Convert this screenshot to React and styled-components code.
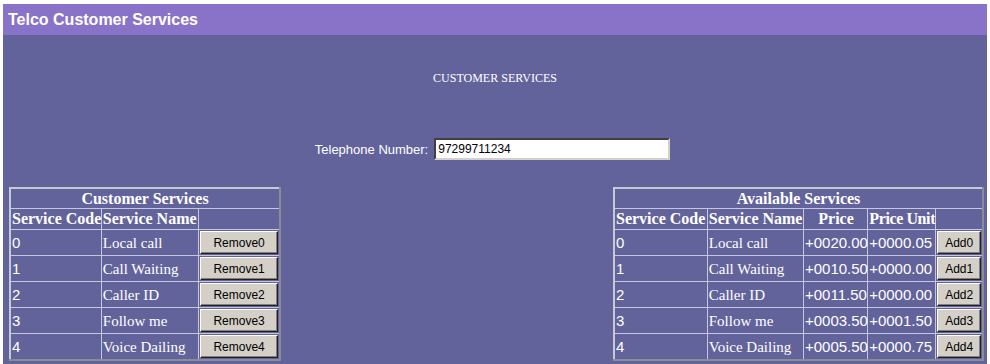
import React from "react";
import styled, { createGlobalStyle } from "styled-components";

const Global = createGlobalStyle`
  html, body { margin: 0; padding: 0; background: #ffffff; }
  body { width: 990px; height: 364px; overflow: hidden; }
`;

const Page = styled.div`
  margin: 4px 3px 0 3px;
  height: 360px;
  background: #63639c;
  display: flex;
  flex-direction: column;
`;

const TitleBar = styled.div`
  height: 31px;
  background: #8973c8;
  display: flex;
  align-items: center;
  padding-left: 5px;
  font: bold 16px "Liberation Sans", Arial, sans-serif;
  color: #ffffff;
`;

const Subtitle = styled.div`
  margin-top: 36px;
  text-align: center;
  font: 12px/14px "Liberation Serif", "Times New Roman", serif;
  color: #ffffff;
`;

const PhoneRow = styled.div`
  margin-top: 53px;
  display: flex;
  justify-content: center;
  align-items: center;
  gap: 6px;
  padding-right: 5px;
`;

const Label = styled.label`
  font: 13px "Liberation Sans", Arial, sans-serif;
  color: #ffffff;
`;

const PhoneInput = styled.input`
  box-sizing: border-box;
  width: 236px;
  height: 22px;
  padding: 0 2px;
  border: 2px solid;
  border-color: #404040 #d4d0c8 #d4d0c8 #404040;
  background: #ffffff;
  font: 12px "Liberation Sans", Arial, sans-serif;
  color: #000000;
  outline: none;
`;

const TablesRow = styled.div`
  margin-top: 27px;
  display: flex;
  justify-content: space-between;
  align-items: flex-start;
  padding: 0 3px 0 6px;
`;

const Table = styled.table`
  table-layout: fixed;
  width: ${(p) => p.$w}px;
  border-collapse: collapse;
  border: 2px solid;
  border-color: #c9c9d6 #8c8c98 #8c8c98 #c9c9d6;
  color: #ffffff;
`;

const Col = styled.col`
  width: ${(p) => p.$w}px;
`;

const CaptionCell = styled.th`
  height: 19px;
  padding: 0;
  border: 1px solid #c6c6e0;
  text-align: center;
  font: bold 16px/18px "Liberation Serif", "Times New Roman", serif;
`;

const HeadCell = styled.th`
  height: 20px;
  padding: 0 0 0 1px;
  border: 1px solid #c6c6e0;
  text-align: ${(p) => (p.$center ? "center" : "left")};
  font: bold 16px/18px "Liberation Serif", "Times New Roman", serif;
  letter-spacing: ${(p) => (p.$tight ? "-0.4px" : "normal")};
  white-space: nowrap;
`;

const Cell = styled.td`
  height: 25px;
  padding: 0 0 0 1px;
  border: 1px solid #c6c6e0;
  text-align: left;
  white-space: nowrap;
  font: ${(p) =>
    p.$sans
      ? `15px/18px "Liberation Sans", Arial, sans-serif`
      : `15px/18px "Liberation Serif", "Times New Roman", serif`};
`;

const ButtonCell = styled.td`
  height: 25px;
  padding: 0 1px;
  border: 1px solid #c6c6e0;
  text-align: center;
`;

const Button = styled.button`
  box-sizing: border-box;
  width: 100%;
  height: 23px;
  margin: 0;
  padding: 0;
  background: #d4d0c8;
  border: 1px solid;
  border-color: #ffffff #202020 #202020 #ffffff;
  box-shadow: inset -1px -1px 0 #808080;
  font: 12px "Liberation Sans", Arial, sans-serif;
  color: #000000;
`;

const services = [
  { code: "0", name: "Local call", price: "+0020.00", unit: "+0000.05" },
  { code: "1", name: "Call Waiting", price: "+0010.50", unit: "+0000.00" },
  { code: "2", name: "Caller ID", price: "+0011.50", unit: "+0000.00" },
  { code: "3", name: "Follow me", price: "+0003.50", unit: "+0001.50" },
  { code: "4", name: "Voice Dailing", price: "+0005.50", unit: "+0000.75" },
];

export default function App() {
  return (
    <>
      <Global />
      <Page>
        <TitleBar>Telco Customer Services</TitleBar>
        <Subtitle>CUSTOMER SERVICES</Subtitle>
        <PhoneRow>
          <Label htmlFor="tel">Telephone Number:</Label>
          <PhoneInput id="tel" defaultValue="97299711234" />
        </PhoneRow>
        <TablesRow>
          <Table $w={272}>
            <colgroup>
              <Col $w={91} />
              <Col $w={97} />
              <Col $w={81} />
            </colgroup>
            <tbody>
              <tr>
                <CaptionCell colSpan={3}>Customer Services</CaptionCell>
              </tr>
              <tr>
                <HeadCell>Service Code</HeadCell>
                <HeadCell>Service Name</HeadCell>
                <HeadCell></HeadCell>
              </tr>
              {services.map((s) => (
                <tr key={s.code}>
                  <Cell $sans>{s.code}</Cell>
                  <Cell>{s.name}</Cell>
                  <ButtonCell>
                    <Button>Remove{s.code}</Button>
                  </ButtonCell>
                </tr>
              ))}
            </tbody>
          </Table>
          <Table $w={371}>
            <colgroup>
              <Col $w={93} />
              <Col $w={96} />
              <Col $w={64} />
              <Col $w={68} />
              <Col $w={47} />
            </colgroup>
            <tbody>
              <tr>
                <CaptionCell colSpan={5}>Available Services</CaptionCell>
              </tr>
              <tr>
                <HeadCell>Service Code</HeadCell>
                <HeadCell>Service Name</HeadCell>
                <HeadCell $center>Price</HeadCell>
                <HeadCell $center $tight>Price Unit</HeadCell>
                <HeadCell></HeadCell>
              </tr>
              {services.map((s) => (
                <tr key={s.code}>
                  <Cell $sans>{s.code}</Cell>
                  <Cell>{s.name}</Cell>
                  <Cell $sans>{s.price}</Cell>
                  <Cell $sans>{s.unit}</Cell>
                  <ButtonCell>
                    <Button>Add{s.code}</Button>
                  </ButtonCell>
                </tr>
              ))}
            </tbody>
          </Table>
        </TablesRow>
      </Page>
    </>
  );
}
